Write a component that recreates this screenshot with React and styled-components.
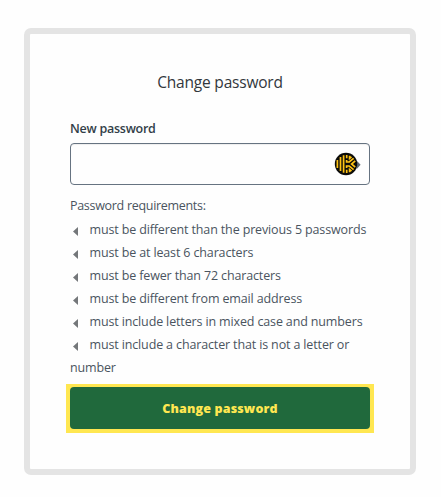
import React from "react";
import styled, { createGlobalStyle } from "styled-components";

const GlobalStyle = createGlobalStyle`
  *, *::before, *::after { box-sizing: border-box; }
  body {
    margin: 0;
    background: #fefefe;
    color: #4a545e;
    font-family: "Open Sans", "Noto Sans", sans-serif;
  }
`;

const Page = styled.main`
  height: 497px;
  padding: 28px 25px 22px 24px;
`;

const Card = styled.form`
  height: 447px;
  border: 6px solid #e4e4e4;
  border-radius: 7px;
  padding: 34px 40px 0;
  display: flex;
  flex-direction: column;
`;

const Title = styled.h1`
  margin: 0;
  height: 28px;
  font-size: 15.5px;
  font-weight: 400;
  line-height: 28px;
  letter-spacing: -0.2px;
  text-align: center;
  white-space: nowrap;
  color: #32373c;
`;

const Label = styled.label`
  margin-top: 22px;
  height: 25px;
  font-size: 12.5px;
  font-weight: 600;
  line-height: 22px;
  letter-spacing: -0.25px;
  color: #323e48;
`;

const Field = styled.div`
  height: 42px;
  border: 1px solid #667381;
  border-radius: 4px;
  box-shadow: inset 0 1px 1px #eeeeee;
  display: flex;
  align-items: center;
  padding-right: 7px;
`;

const Input = styled.input`
  flex: 1;
  min-width: 0;
  height: 100%;
  border: 0;
  outline: 0;
  background: transparent;
`;

const Requirements = styled.section`
  margin-top: 9px;
  font-size: 12.5px;
  line-height: 23px;
  letter-spacing: -0.14px;
`;

const Intro = styled.p`
  margin: 0;
  height: 24px;
  letter-spacing: -0.3px;
`;

const List = styled.ul`
  list-style: none;
  margin: 0;
  padding: 0;
`;

const Item = styled.li`
  min-height: 23px;
`;

const Marker = styled.svg`
  width: 5px;
  height: 9px;
  margin: 0 11.5px 0 3px;
  vertical-align: -2px;
  fill: #74777a;
`;

const FocusRing = styled.div`
  margin: 5px -4px 0;
  padding: 3px 4px 4px;
  background: #ffe751;
`;

const Button = styled.button`
  display: block;
  width: 100%;
  height: 42px;
  border: 0;
  border-radius: 4px;
  padding: 0;
  background: #20693c;
  color: #ffe751;
  font: 800 12.5px/43px "Open Sans", "Noto Sans", sans-serif;
  letter-spacing: 0.15px;
`;

const rules = [
  "must be different than the previous 5 passwords",
  "must be at least 6 characters",
  "must be fewer than 72 characters",
  "must be different from email address",
  "must include letters in mixed case and numbers",
  "must include a character that is not a letter or number",
];

function ManagerIcon() {
  return (
    <svg width="28" height="24" viewBox="0 0 28 24" aria-hidden="true">
      <path d="M22.5 8.5 L26.6 12.8 L22.5 17.2 Z" fill="#5d6872" />
      <circle cx="12" cy="12" r="11.2" fill="#0b0b09" />
      <g fill="none" stroke="#ffc314" strokeWidth="1.7">
        <path d="M3.4 8V16M6.5 5V19M9.6 3.2V20.8" />
        <path d="M12.6 8V10H15.2L19.6 6.3M12.6 16V14H15.2L19.6 17.7" />
        <path d="M12.7 3V6.2M12.7 21V17.8M15.6 3.8V6.4L17.5 4.8M15.6 20.2V17.6L17.5 19.2" />
        <path d="M21.2 8.9L17.6 12L21.2 15.1" />
      </g>
    </svg>
  );
}

export default function App() {
  return (
    <>
      <GlobalStyle />
      <Page>
        <Card>
          <Title>Change password</Title>
          <Label htmlFor="new-password">New password</Label>
          <Field>
            <Input id="new-password" type="password" />
            <ManagerIcon />
          </Field>
          <Requirements>
            <Intro>Password requirements:</Intro>
            <List>
              {rules.map((rule) => (
                <Item key={rule}>
                  <Marker viewBox="0 0 5 9" aria-hidden="true">
                    <path d="M5 0V9L0 4.5Z" />
                  </Marker>
                  {rule}
                </Item>
              ))}
            </List>
          </Requirements>
          <FocusRing>
            <Button type="button">Change password</Button>
          </FocusRing>
        </Card>
      </Page>
    </>
  );
}
